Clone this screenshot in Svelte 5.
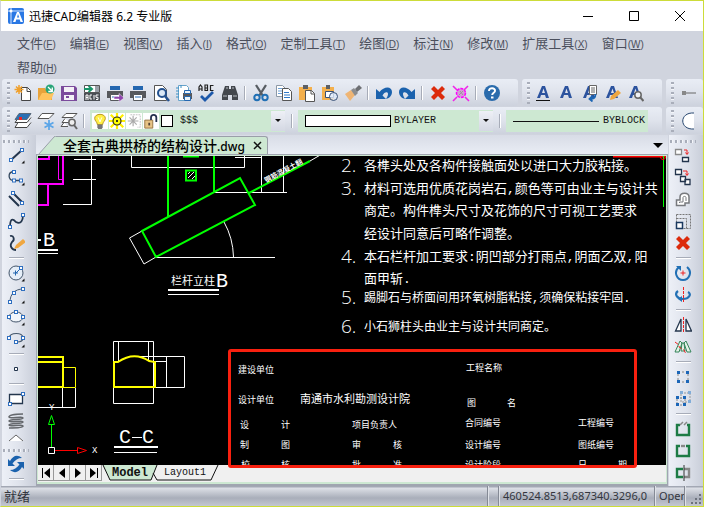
<script>
  const menus = [
    ['文件', 'F'], ['编辑', 'E'], ['视图', 'V'], ['插入', 'I'], ['格式', 'O'], ['定制工具', 'T'],
    ['绘图', 'D'], ['标注', 'N'], ['修改', 'M'], ['扩展工具', 'X'], ['窗口', 'W'], ['帮助', 'H']
  ];

  const A = '<path d="M3 14 8 2h3l4 12h-3l-1-3H7l-1 3zM8 9h3L9.500 4.500z" fill="#2c539e"/>';
  const page = 'M7.500 3.500h6l3 3v10h-9z';
  const cross = '<path d="M2 5l3-3 4 4 4-4 3 3-4 4 4 4-3 3-4-4-4 4-3-3 4-4z" fill="#dc2b0c"/>';
  const sq = (x, y) => `<rect x="${x - 1.5}" y="${y - 1.5}" width="3" height="3" fill="#fff" stroke="#2f6fc0"/>`;
  const more = '<path d="M17.500 14.500v3h-3z" fill="#111"/>';
  const printer = '<path d="M4 2h10v4H4z" fill="#2467b0"/><path d="M1 7h16v7h-3v-2H4v2H1z" fill="#56585c"/><path d="M4.500 10.500h9v6h-9z" fill="#fff" stroke="#56585c"/><path d="M6 13h6" stroke="#2467b0"/>';

  const icons = {
    fresh: `<path d="${page}" fill="#fff" stroke="#444"/><path d="M13 3.500v4h4" fill="none" stroke="#444"/><path d="M5 1v9M.5 5.500h9M2 2.500l6 6M8 2.500l-6 6" stroke="#f0a02c" stroke-width="1.500"/>`,
    open: '<path d="M1 4h7l1 2h6v10H1z" fill="#e8a33b"/><path d="M1 16 5 9h12l-3 7z" fill="#ffc35c"/><circle cx="13" cy="5" r="4.500" fill="#28a579"/><path d="M11 3l4 4M15.300 3.500v4h-4" stroke="#fff" fill="none" stroke-width="1.300"/>',
    save: '<path d="M1 2h14l2 2v13H1z" fill="#7b4b9c"/><path d="M4 3h10v5H4zM4 11h10v5H4z" fill="#f3f1f6"/><path d="M6 13h3" stroke="#7b4b9c" stroke-width="2"/>',
    acis: '<path d="M1.500 1.500h15v7h-15z" fill="#fff" stroke="#555"/><path d="M12 2h4v6h-4z" fill="#9aa0a8"/><path d="M1 5h7M5.500 2 9 5 5.500 8" stroke="#199468" fill="none" stroke-width="2"/><path d="M1 9h16v8H1z" fill="#4b4f55"/><path d="M3 16v-5h2v5M3 13.500h2M9 11H7v4h2M11 11v4.500M15.500 11H13v2.300h2v2.200h-2" stroke="#fff" fill="none"/>',
    printout: printer + '<path d="M8 12.500h5v-3l5 4.500-5 4v-3H8z" fill="#8e44ad" stroke="#fff" stroke-width=".5"/>',
    print: printer,
    preview: '<path d="M2.500 1.500h8l4 4v11h-12z" fill="#fff" stroke="#555"/><circle cx="10" cy="9" r="4" fill="#dbe8f7" stroke="#24518f" stroke-width="2"/><path d="M13 12l4 5" stroke="#24518f" stroke-width="2.500"/>',
    setup: '<path d="M3.500 1.500h8l2 2v13h-10z" fill="#fff" stroke="#67a3ca"/><path d="M1 4h3M1 7h3M1 10h3M1 13h3M6 1v3" stroke="#3f90c4"/><path d="M8 9h9v6H8z" fill="#56585c"/><path d="M9.500 6.500h6v3h-6zM9.500 12.500h6v4h-6z" fill="#eaf4fb" stroke="#2467b0"/>',
    spell: '<path d="M1 7V3l1.500-2L4 3v4M1 5h3M7 1v5.500h2.500V1zM7 4h2.500M15.500 1.500h-3v5h3" fill="none" stroke="#222" stroke-width="1.200"/><path d="M3 12l4 4 8-8" fill="none" stroke="#1c58aa" stroke-width="2.800"/>',
    find: '<path d="M4 2h4v3h2V2h4l3 9v5h-6v-5H7v5H1v-5z" fill="#43474d"/><path d="M2 12h4M12 12h4M5 4h2M11 4h2" stroke="#b9bec5"/>',
    cut: '<path d="M4 1l7 11M14 1 7 12" stroke="#585d63" stroke-width="2.300"/><circle cx="5" cy="13.500" r="2.700" fill="none" stroke="#2170b5" stroke-width="2"/><circle cx="13" cy="13.500" r="2.700" fill="none" stroke="#2170b5" stroke-width="2"/>',
    copy: '<path d="M1.500 1.500h6l3 3v8h-9z" fill="#fff" stroke="#8c98a6"/><path d="M3 4.500h4M3 7h4M3 9.500h4" stroke="#6da0d6"/><path d="M7.500 4.500h6l3 3v9h-9z" fill="#fff" stroke="#555"/><path d="M9 8.500h5M9 11h6M9 13.500h6" stroke="#2e78c8"/>',
    paste: '<path d="M1 3h13v13H1z" fill="#f4b04c"/><path d="M5 1h5v4H5z" fill="#5c5f64"/><path d="M7.500 6.500h6l3 3v8h-9z" fill="#fff" stroke="#555"/><path d="M13 6.500v3.500h3.500" fill="none" stroke="#555"/>',
    special: '<path d="M1 3h12v13H1z" fill="#f4b04c"/><path d="M5 1h4v4H5z" fill="#5c5f64"/><path d="M4.500 7.500h8v6h-8z" fill="#fff" stroke="#385075"/><circle cx="12.500" cy="12.500" r="4" fill="#dfeafa" fill-opacity=".8" stroke="#385075"/>',
    brush: '<path d="M1 10l6-4 4 5-5 6z" fill="#efb574"/><path d="M7 6l3-2 4 5-3 3z" fill="#8b8d90"/><path d="M11 5l4-4 3 3-5 4z" fill="#6d6f73"/>',
    undo: '<path d="M1 5v10h10l-3.500-3.500C9 8 13 7 13 10c0 2-1 3-2 5 4-1 6-4 6-7 0-6-8-6-12.500 0z" fill="#1b62ad"/>',
    redo: '<path d="M17 5v10H7l3.500-3.500C9 8 5 7 5 10c0 2 1 3 2 5-4-1-6-4-6-7 0-6 8-6 12.500 0z" fill="#1b62ad"/>',
    cross,
    purge: '<circle cx="9" cy="9" r="4.500" fill="#d69bd9" stroke="#f0f" stroke-width="1.500" stroke-dasharray="3 1"/><path d="M1 2l4 4M16 2l-4 4M1 17l4-4M17 17l-4-4" stroke="#f025e8" stroke-width="1.600"/><path d="M7 11l4-4M8 7l3 4" stroke="#999"/>',
    help: '<circle cx="9" cy="9" r="8" fill="#2a6bac"/><path d="M6 7c0-4 6.500-3.500 6 0-.2 1.800-2.800 1.800-2.800 4" fill="none" stroke="#fff" stroke-width="2"/><path d="M8 12.500h2.500v2H8z" fill="#fff"/>',
    underline: A + '<path d="M2 16.500h14" stroke="#111"/>',
    text: A,
    textpage: A + '<path d="M9.500 1.500h7v9h-7z" fill="#fff" stroke="#666"/><path d="M11 4h4M11 6h4M11 8h4" stroke="#666"/><path d="M15.500 10c0 4-2 5-5 5M12.500 12l-3 3 3 2.500" stroke="#1c66b4" fill="none" stroke-width="1.800"/>',
    textedit: A + '<path d="M7 16l1-4 7-6 3 3-7 6z" fill="#efa741"/>',
    textfind: A + '<circle cx="12" cy="11" r="3.200" fill="#f0f2f6" stroke="#666" stroke-width="1.500"/><path d="M14 13l3.500 4" stroke="#666" stroke-width="2"/>',
    ray: '<path d="M4 9h14" stroke="#666"/><path d="M4 7h4v4H4z" fill="#888"/>',
    moon: '<path d="M16 1C1 0 1 18 16 17z" fill="#fff"/><path d="M16 1C1 0 1 18 16 17" fill="none" stroke="#26456e"/>',
    layers: '<path d="M4 10.500 1 15.500h12l4-5M4 6.500 1 10.500h12l4-5" fill="#fff" stroke="#444"/><path d="M5 1.500h12l-4 6H1z" fill="#2b70b4" stroke="#5a6a7c"/><path d="M5 5h3v3H5z" fill="#e22"/>',
    layernew: '<path d="M5 1.500h12l-5 5H1z" fill="#fff" stroke="#555"/><path d="M12 8v10M7.500 10.500l9 5M16.500 10.500l-9 5" stroke="#5aa5e8" stroke-width="1.700"/>',
    layerfind: '<path d="M6 1.500h11l-4 4H2zM5 6.500l-3 4h8M4 10.500l-3 4h7" fill="#fff" stroke="#555"/><circle cx="12" cy="10.500" r="3.200" fill="#eee" stroke="#666" stroke-width="1.500"/><path d="M14 13l3 4" stroke="#666" stroke-width="2"/>',
    line: '<path d="M4 14 15 4" stroke="#24364d" stroke-width="2"/>' + sq(4, 14) + sq(15, 4) + more,
    polyline: '<path d="M7 3.500C0 4 1 12.500 7 12.500h7" fill="none" stroke="#33475e" stroke-width="1.300"/>' + sq(7, 4) + sq(7, 12.5) + sq(14, 12.5) + more,
    double: '<path d="M2 6l10 10M6 3l10 10" stroke="#24364d" stroke-width="2"/>' + sq(6, 3) + sq(15, 13),
    spline: '<path d="M3 15C3 3 8 9 9 10c5 3 7-2 7-7" fill="none" stroke="#24364d" stroke-width="1.800"/>' + sq(3, 15) + sq(16, 3),
    sketch: '<path d="M3 2c4-1 5 4 2 6-3 4 0 8 4 8" fill="none" stroke="#24364d" stroke-width="1.800"/><path d="M7 15l2-4 7-6 3 3-8 6z" fill="#efa741"/>',
    circle: '<circle cx="9" cy="9" r="7" fill="#e5eef8" stroke="#44566b"/><path d="M8 10l6-6" stroke="#2467b0"/>' + sq(14, 4) + '<path d="M6 9h5M8.500 6.500v5" stroke="#2467b0"/>' + more,
    arc: '<path d="M3 16C3 8 8 3 16 3" fill="none" stroke="#44566b"/>' + sq(3, 16) + sq(7, 7) + sq(16, 3) + more,
    ellipse: '<ellipse cx="9" cy="9" rx="7" ry="5" fill="#f2f6fb" stroke="#44566b"/>' + sq(9, 4) + sq(2, 9) + sq(16, 9) + more,
    ellarc: '<path d="M2 8C3 2 16 2 16 8c0 3-3 4-6 4" fill="none" stroke="#44566b" stroke-width="1.200"/>' + sq(2, 8) + sq(16, 8) + sq(9, 12) + more,
    point: '<path d="M7.500 7.500h3v3h-3z" fill="#fff" stroke="#22344c"/>',
    rect: '<path d="M2.500 4.500h13v9h-13z" fill="#fff" stroke="#24364d" stroke-width="1.300"/>' + sq(16, 4) + sq(3, 14),
    spiral: '<path d="M16 2C9 2 2 3 2 5s14-1 14 1-14 1-14 3 14-1 14 1-14 1-14 3 14-1 14 1-8 2-14 2" fill="none" stroke="#65686d" stroke-width="1.600"/>',
    sync: '<path d="M1 4v7h7L5.500 8.500C8 5 11 3 15 3 10-1 6 1 3 6zM17 14V7h-7l2.500 2.500C10 13 7 15 3 15c5 4 9 2 12-3z" fill="#1b62ad"/>',
    copyobj: '<path d="M1.500 3.500h6v5h-6z" fill="#fff" stroke="#8a8a8a" stroke-width="1.300"/><path d="M8.500 11.500h6v4h-6z" fill="#fff" stroke="#22344c" stroke-width="1.300"/><path d="M10 4h3v4M11.500 6.500 13 8.500l1.500-2" fill="none" stroke="#e22"/>',
    multiple: '<path d="M1.500 1.500h6v5h-6zM6.500 8.500h5v5h-5zM11 11.500h5v5h-5z" fill="#fff" stroke="#22344c" stroke-width="1.300"/><path d="M9 3h4v4M11.500 5.500 13 7.500l1.500-2" fill="none" stroke="#e22"/>',
    offset: '<path d="M2.500 15.500V10H6V7C6 2 15 2 15 7v6h-4v2.500z" fill="#fff" stroke="#77797d" stroke-width="1.500"/><path d="M5.500 13v-1H9V7.500c0-1.500 3-1.500 3 0V11" fill="none" stroke="#77797d"/>',
    scale: '<path d="M2.500 2.500h14v14h-14zM2.500 6.500h10v10" fill="none" stroke="#777" stroke-dasharray="2 1"/><path d="M2.500 10.500h6v6h-6z" fill="#fff" stroke="#1b3960" stroke-width="1.500"/>',
    rotate: '<path d="M5 3C-1 8 3 16 9 16s10-8 4-13" fill="none" stroke="#2170b5" stroke-width="2"/><path d="M2 2h5v5z" fill="#2170b5"/><path d="M6.500 9h5M9 6.500v5" stroke="#e22"/>',
    rotate3: '<path d="M4 5C0 8 3 13 9 13s9-5 5-7" fill="none" stroke="#2170b5" stroke-width="2.200"/><path d="M8 10v6l-4-3z" fill="#2170b5"/><path d="M9.500 1v16" stroke="#e22" stroke-dasharray="3 1"/>',
    mirror: '<path d="M7 3v12H1.500zM12 3v12h5.500z" fill="#fff" stroke="#24364d" stroke-width="1.300"/><path d="M9.500 1v16" stroke="#e22" stroke-dasharray="3 1"/>',
    mirror3: '<path d="M6 3l2 2-3 9H1zM12 3l-2 2 3 9h4zM8 5h2l1 8H7z" fill="#e4f2e7" stroke="#35855a"/><path d="M1 4l4 3v2l5 3 2 4" stroke="#e22" fill="none" stroke-dasharray="4 2"/>',
    group: '<path d="M4 4h10v10H4z" fill="none" stroke="#888" stroke-dasharray="2 2"/><path d="M3 3h3v3H3zM12 3h3v3h-3zM3 12h3v3H3zM12 12h3v3h-3z" fill="#1b66b8"/>',
    ungroup: '<path d="M7 3h9v9H7z" fill="none" stroke="#999" stroke-dasharray="2 1"/><path d="M6 1h3v3H6zM14 1h3v3h-3zM14 10h3v3h-3z" fill="#82add8"/><path d="M3 8h8v7H3z" fill="none" stroke="#888" stroke-dasharray="2 1"/><path d="M2 6h3v3H2zM9 6h3v3H9zM2 13h3v3H2zM9 13h3v3H9z" fill="#1b66b8"/>',
    break1: '<path d="M6 5H3v10h12V5h-2" fill="none" stroke="#1d7b45" stroke-width="2.400"/><path d="M6 5l3-3M10 5l3-3" stroke="#888" stroke-width="1.500"/>',
    break2: '<path d="M6 4H3v10h12V4h-3" fill="none" stroke="#1d7b45" stroke-width="2.400"/><path d="M7 4h4" stroke="#888" stroke-width="2.400"/>',
    join: '<path d="M9 5H3v8h6" fill="none" stroke="#1d7b45" stroke-width="2.400"/><path d="M10 5h5v8h-5" fill="none" stroke="#888" stroke-width="2.400"/><path d="M10 1v16" stroke="#333"/>',
    bulb: '<path d="M6 13C6 10 3 9 3 6c0-6 12-6 12 0 0 3-3 4-3 7z" fill="#ffef45" stroke="#b38d13"/><path d="M7 5l2 5 2-5" fill="none" stroke="#fff"/><path d="M6 13h6v3l-1 2H7l-1-2z" fill="#777"/>',
    sun: '<path d="M9 0v18M0 9h18M2 2l14 14M16 2 2 16" stroke="#ffef00" stroke-width="2.500"/><circle cx="9" cy="9" r="4.500" fill="#ff0" stroke="#222" stroke-width="1.300"/><path d="M8 8h2v2H8z" fill="#222"/>',
    freeze: '<path d="M5 2h11v14h-3" fill="none" stroke="#bbb" stroke-dasharray="2 1"/><path d="M8 3v12M2 9h12M4 5l8 8M12 5l-8 8" stroke="#aaa" stroke-width="1.300"/>',
    lock: '<path d="M2 8h9v9H2z" fill="#e7c385" stroke="#92703c"/><path d="M9 8V5c0-4 6-4 6 0v5" fill="none" stroke="#26304e" stroke-width="2"/><path d="M6 11h2v3H6z" fill="#543"/>'
  };

  const fileTools = [
    ['fresh', '新建'], ['open', '打开'], ['save', '保存'], ['acis', 'ACIS 输出'], ['printout', '批量打印'],
    ['print', '打印'], ['preview', '打印预览'], ['setup', '页面设置'], ['spell', '拼写检查'], ['find', '查找'], null,
    ['cut', '剪切'], ['copy', '复制'], ['paste', '粘贴'], ['special', '选择性粘贴'], ['brush', '特性匹配'], null,
    ['undo', '撤销'], ['redo', '重做'], null, ['cross', '删除'], ['purge', '清理'], null, ['help', '帮助']
  ];
  const textTools = [['underline', '单行文字'], ['text', '多行文字'], ['textpage', '文字样式'], ['textedit', '编辑文字'], ['textfind', '查找文字']];
  const layerTools = [['layers', '图层'], ['layernew', '新图层'], ['layerfind', '浏览图层']];
  const drawTools = [
    ['line', '直线'], ['polyline', '多段线'], ['double', '双线'], ['spline', '样条曲线'], ['sketch', '徒手画'], null,
    ['circle', '圆'], ['arc', '圆弧'], ['ellipse', '椭圆'], ['ellarc', '椭圆弧'], null, ['point', '点'], null,
    ['rect', '矩形'], ['spiral', '螺旋']
  ];
  const editTools = [
    ['copyobj', '复制对象'], ['multiple', '多重复制'], ['offset', '偏移'], ['scale', '缩放'], ['cross', '删除'], null,
    ['rotate', '旋转'], ['rotate3', '三维旋转'], null, ['mirror', '镜像'], ['mirror3', '三维镜像'], null,
    ['group', '组'], ['ungroup', '取消组'], null, ['break1', '打断'], ['break2', '打断于点'], ['join', '合并']
  ];

  // Numbered notes: number, baseline, size class, text
  const notes = [
    ['2.', 170, 'n13', '各榫头处及各构件接触面处以进口大力胶粘接。'],
    ['3.', 193, 'n13', '材料可选用优质花岗岩石,颜色等可由业主与设计共'],
    ['', 215, 'n13', '商定。构件榫头尺寸及花饰的尺寸可视工艺要求'],
    ['', 238, 'n13', '经设计同意后可略作调整。'],
    ['4.', 261, 'n13', '本石栏杆加工要求:阴凹部分打雨点,阴面乙双,阳'],
    ['', 283, 'n13', '面甲斩.'],
    ['5.', 302, 'n12', '踢脚石与桥面间用环氧树脂粘接,须确保粘接牢固.'],
    ['6.', 331, 'n12', '小石狮柱头由业主与设计共同商定。']
  ];
  // Title block cells: x, baseline, text
  const cells = [
    [238, 373, '建设单位'], [238, 403, '设计单位'], [466, 371, '工程名称'], [467, 406, '图'], [507, 406, '名'],
    [240, 428, '设'], [281, 428, '计'], [352, 428, '项目负责人'], [465, 426, '合同编号'], [578, 426, '工程编号'],
    [240, 448, '制'], [281, 448, '图'], [352, 448, '审'], [393, 448, '核'], [465, 448, '设计编号'], [578, 448, '图纸编号'],
    [241, 468, '校'], [281, 468, '核'], [352, 468, '批'], [393, 468, '准'], [465, 468, '设计阶段'], [578, 468, '日'], [618, 468, '期']
  ];
</script>

{#snippet icon(name)}
  <svg viewBox="0 0 18 18" width="18" height="18" aria-hidden="true">{@html icons[name]}</svg>
{/snippet}

{#snippet tools(list)}
  {#each list as t}
    {#if t}
      <button class="tool" aria-label={t[1]}>{@render icon(t[0])}</button>
    {:else}
      <span class="sep"></span>
    {/if}
  {/each}
{/snippet}

<div class="window">
  <header>
    <svg class="logo" viewBox="0 0 16 16" width="16" height="16" aria-hidden="true">
      <rect width="16" height="16" rx="2" fill="#2a78e4" />
      <path d="M3 0v16M0 3h16" stroke="#d5e6ff" stroke-width="1" />
      <circle cx="3" cy="3" r="1.500" fill="#fff" />
      <path d="M5 14l4-10h2l4 10h-2.500l-.8-2.500H8.200L7.500 14zM9 9.500h2.200L10 6z" fill="#fff" />
    </svg>
    <h1>迅捷CAD编辑器 6.2 专业版</h1>
    <div class="winbtns">
      <button aria-label="最小化"><svg width="12" height="12"><path d="M1 6.500h10" /></svg></button>
      <button aria-label="最大化"><svg width="12" height="12"><path d="M1.500 1.500h9v9h-9z" /></svg></button>
      <button aria-label="关闭"><svg width="12" height="12"><path d="M1 1l10 10M11 1 1 11" /></svg></button>
    </div>
  </header>

  <nav>
    {#each menus as [name, key]}
      <button>{name}<small>(<u>{key}</u>)</small></button>
    {/each}
  </nav>

  <div class="bars">
    <div class="bar grow"><i class="grip"></i>{@render tools(fileTools)}</div>
    <div class="bar mid"><i class="grip"></i>{@render tools(textTools)}</div>
    <div class="bar end"><i class="grip"></i><button class="tool" aria-label="射线">{@render icon('ray')}</button></div>
  </div>

  <div class="bars">
    <div class="bar grow">
      <i class="grip"></i>
      {@render tools(layerTools)}
      <span class="sep"></span>
      <div class="combo layer">
        <select aria-label="当前图层"><option>$$$</option></select>
        <div class="states">
          {#each ['bulb', 'sun', 'freeze', 'lock'] as s}<span>{@render icon(s)}</span>{/each}
          <b></b>
        </div>
      </div>
      <span class="sep wide"></span>
      <div class="combo colour">
        <select aria-label="颜色"><option>BYLAYER</option></select>
        <div class="swatch"></div>
      </div>
      <span class="sep wide"></span>
      <div class="combo ltype">
        <select aria-label="线型"><option>BYBLOCK</option></select>
        <div class="stroke"></div>
      </div>
    </div>
    <div class="bar end"><i class="grip"></i><button class="tool" aria-label="弧">{@render icon('moon')}</button></div>
  </div>

  <main>
    <aside>
      <i class="hgrip"></i>
      {@render tools(drawTools)}
      <button class="more" aria-label="更多"><svg width="16" height="8"><path d="M1 7l7-6 7 6" fill="#fff" stroke="#666" /></svg></button>
      <i class="hgrip"></i>
      <button class="tool" aria-label="同步">{@render icon('sync')}</button>
      <span class="sep"></span>
    </aside>

    <section class="doc">
      <div class="doctabs">
        <svg class="slant" width="18" height="19" aria-hidden="true"><path d="M0 19 16 1q1-1 2-1v19z" fill="#cde8d2" /><path d="M0 19 16 1q1-1 2-1" fill="none" stroke="#9a9fa9" /></svg>
        <div class="tab">
          <span>全套古典拱桥的结构设计<small>.dwg</small></span>
          <button aria-label="关闭图纸"><svg width="9" height="9"><path d="M1 1l7 7M8 1 1 8" stroke="#111" stroke-width="1.500" /></svg></button>
        </div>
        <button class="list" aria-label="图纸列表"><svg width="10" height="5"><path d="M0 0h10L5 5z" /></svg></button>
      </div>

      <div class="frame">
        <div class="canvas">
          <svg class="cad" role="img" aria-label="图纸">
            <!-- Drawing units start at (38,156) -->
            <g transform="translate(-38 -156)">
              <g class="m">
                <path d="M38 159h11v-4M63 155v29H38M48 184v21H38" stroke-width="2" />
                <path d="M58.500 155v24.500H63" />
              </g>
              <path class="w" d="M74 159.500h22M73 179.500h23M91.500 155v49.500H63" />
              <path class="w thick" d="M38 240h3" /><text x="43" y="246" class="big">B</text>
              <path class="w" d="M38 253.500h20" /><path class="w thick" d="M38 250h20" />

              <path class="w" d="M131.500 155v12.500h113V155M214 192.500h73M261.500 155v37M283.500 155v37M235 157.500h26M142 231l-12.500 7L144 264l12-7M156 257.500h119M224 222q9 16 9.500 35" />
              <path class="g" d="M168 155v62M214 155v37M183 156.500h16M186 170.500h10v10h-10zM142 231l98-53 15 27-99 52zM249 193l61-32" />
              <path class="w" d="M188 178l6-6M188 174l2-2M192 179l3-3M310 161l12-7" />
              <text class="slope" transform="translate(266 183) rotate(-28)">钢筋混凝土翻</text>
              <text x="171" y="285" class="t11">栏杆立柱</text><text x="216" y="287" class="big">B</text>
              <path class="w thick" d="M168 290h51" /><path class="w" d="M168 294.500h51" />

              <path class="w" d="M62.500 388v19M75.500 388v19.500H38M113.500 341.500h40v62h-40zM118.500 341v20M148.500 341v19M137 356.500h47.500v31H154M166.500 356v31M155 361.500h11" />
              <path class="y" d="M38 357h25v30H38M38 362h25M114 387v-25h4q16-11 31-1l6 1v25z" stroke-width="2" />
              <path class="y" d="M63 367.500h12.500v20H63" />
              <text x="119" y="443" class="big">C</text><path class="w" d="M132 437.500h10" /><text x="142" y="443" class="big">C</text>
              <path class="w thick" d="M114 447h44" /><path class="w" d="M114 452.500h43" />

              <path d="M51.500 447v-22M48.500 424.500h6l-3-9z" fill="none" stroke="#0f0" />
              <path d="M54 450.500h23M77.500 447.500v6l9-3z" fill="none" stroke="#f00" />
              <path class="w" d="M48.500 447.500h6v6h-6z" />
              <text x="49" y="410" class="axis">Y</text><text x="92" y="453" class="axis">X</text>

              <path d="M613 156.500h52" stroke="#f00" stroke-width="2" /><path d="M663.500 156v51" stroke="#0f0" />
              <circle cx="663" cy="157" r="2.500" fill="none" stroke="#f00" />

              {#each notes as [num, y, size, text]}
                {#if num}<text x="341" y={y + 2} class="num">{num}</text>{/if}
                <text x="364" {y} class={size}>{text}</text>
              {/each}
              {#each cells as [x, y, text]}
                <text {x} {y} class="t9">{text}</text>
              {/each}
              <text x="300" y="403" class="t11">南通市水利勘测设计院</text>
            </g>
          </svg>
          <div class="mark"></div>
        </div>
        <div class="sheets">
          <button class="nav" aria-label="首页"><svg width="10" height="10"><path d="M1 0h1v10H1zM9 0v10L3 5z" /></svg></button>
          <button class="nav" aria-label="上一页"><svg width="10" height="10"><path d="M8 0v10L2 5z" /></svg></button>
          <button class="nav" aria-label="下一页"><svg width="10" height="10"><path d="M2 0v10l6-5z" /></svg></button>
          <button class="nav" aria-label="末页"><svg width="10" height="10"><path d="M8 0h1v10H8zM1 0v10l6-5z" /></svg></button>
          <div class="sheettabs">
            <svg width="118" height="16" aria-hidden="true">
              <path d="M1 0l7 15h41l6-15z" fill="#cde8d2" />
              <path d="M1 0l7 15h41l6-15M51 8l4 7h54l7-15" fill="none" stroke="#111" />
            </svg>
            <button class="on">Model</button><button>Layout1</button>
          </div>
        </div>
      </div>
    </section>

    <aside class="right">
      <i class="hgrip"></i>
      {@render tools(editTools)}
    </aside>
  </main>

  <footer>
    <span class="ready">就绪</span>
    <span class="blank"></span>
    <span class="coord">460524.8513,687340.3296,0</span>
    <span class="gl">OpenGL</span>
    <svg width="12" height="12" aria-hidden="true"><path d="M9 1h2v2H9zM5 5h2v2H5zM9 5h2v2H9zM1 9h2v2H1zM5 9h2v2H5zM9 9h2v2H9z" fill="#6d727d" /></svg>
  </footer>
</div>

<style>
  :global(body) { overflow: hidden; }
  .window {
    box-sizing: border-box;
    height: 100vh;
    display: flex;
    flex-direction: column;
    border: 1px solid #cddc39;
    border-left-color: #d0d4de;
    background: #d0d4de;
    font: 12px 'Noto Sans', 'Noto Sans CJK SC', sans-serif;
    color: #111;
  }
  button { border: 0; padding: 0; margin: 0; background: none; font: inherit; color: inherit; }
  svg { display: block; flex: none; }

  header { height: 30px; flex: none; display: flex; align-items: center; background: #fff; padding-left: 7px; }
  h1 { flex: 1; margin: 0 0 0 5px; font-size: 12px; font-weight: 400; color: #000; white-space: nowrap; }
  .winbtns { display: flex; }
  .winbtns button { width: 46px; height: 28px; display: grid; place-items: center; }
  .winbtns path { fill: none; stroke: #000; }

  nav { flex: none; display: flex; flex-wrap: wrap; padding: 0 20px 0 16px; column-gap: 14px; height: 48px; align-content: flex-start; }
  nav button { height: 24px; font-size: 13px; color: #4b4f5c; white-space: nowrap; line-height: 22px; }
  nav small { font: 10px 'Liberation Sans', sans-serif; }

  .bars { flex: none; display: flex; gap: 4px; padding-left: 1px; height: 28px; }
  .bar { box-sizing: border-box; display: flex; align-items: center; min-width: 0; height: 27px; padding-left: 5px; border-radius: 3px; background: linear-gradient(#e9edf5, #dfe3ec 50%, #cdd2dd); }
  .grow { flex: 1; }
  .mid { width: 140px; flex: none; }
  .end { width: 37px; flex: none; overflow: hidden; }
  .grip { width: 3px; height: 22px; flex: none; margin-right: 1px; background: repeating-linear-gradient(#a9aeba 0 2px, #f4f6fa 2px 3px, transparent 3px 5px); }
  .tool { width: 23px; height: 22px; flex: none; display: grid; place-items: center; }
  .sep { width: 2px; height: 14px; flex: none; margin: 0 3px; background: linear-gradient(90deg, #a7acb8 50%, #fff 50%); }
  .wide { margin: 0 5px 0 6px; }

  .combo { position: relative; height: 22px; background: #cde8d2; display: flex; }
  .layer { width: 195px; margin-left: 2px; }
  .colour { width: 195px; }
  .ltype { width: 142px; }
  .layer::after, .colour::after { content: ''; position: absolute; right: 0; top: 1px; width: 14px; height: 20px; background: linear-gradient(#eef0f6, #d4d8e3); pointer-events: none; }
  .layer::before, .colour::before { content: ''; position: absolute; z-index: 1; right: 4px; top: 9px; border: 3px solid transparent; border-top-color: #111; border-bottom: 0; pointer-events: none; }
  select { appearance: none; width: 100%; border: 0; border-radius: 0; margin: 0; padding: 0; background: none; color: #111; font: 10px 'Liberation Mono', monospace; }
  .layer select { padding-left: 90px; }
  .colour select { padding-left: 96px; }
  .ltype select { padding-left: 97px; }
  .states { position: absolute; left: 2px; top: 3px; display: flex; gap: 1px; align-items: center; pointer-events: none; }
  .states span { width: 16px; height: 16px; background: #fff; display: grid; }
  .states svg { width: 16px; height: 16px; }
  .states b { width: 10px; height: 10px; border: 1px solid #000; background: #fff; margin-left: 1px; }
  .swatch { position: absolute; left: 7px; top: 5px; width: 84px; height: 10px; border: 1px solid #000; background: #fff; pointer-events: none; }
  .stroke { position: absolute; left: 7px; top: 11px; width: 86px; height: 1px; background: #111; pointer-events: none; }

  main { flex: 1; min-height: 0; display: flex; }
  aside { box-sizing: border-box; width: 34px; flex: none; display: flex; flex-direction: column; align-items: center; overflow: hidden; margin-left: 1px; padding: 5px 6px 0 0; background: linear-gradient(90deg, #edf0f7, #dfe3ec 50%, #c9ced9); }
  .hgrip { width: 26px; height: 3px; flex: none; margin-bottom: 1px; background: repeating-linear-gradient(90deg, #a9aeba 0 2px, #f4f6fa 2px 3px, transparent 3px 5px); }
  aside .sep { width: 15px; height: 2px; margin: 3px 0; background: linear-gradient(#a7acb8 50%, #fff 50%); }
  .more { height: 12px; display: grid; place-items: center; }
  .more + .hgrip { margin-top: 5px; }

  .doc { flex: 1; min-width: 0; display: flex; flex-direction: column; background: #e3e7ef; }
  .doctabs { flex: none; height: 19px; display: flex; align-items: stretch; background: linear-gradient(#d8dce6, #e9edf5); padding: 1px 0 0 2px; box-sizing: border-box; }
  .slant { height: 18px; }
  .tab { display: flex; align-items: center; gap: 8px; padding: 0 5px 0 7px; background: #cde8d2; border-top: 1px solid #9a9fa9; border-right: 1px solid #9a9fa9; border-radius: 0 3px 0 0; }
  .tab span { font: 500 14px/15px 'Noto Sans CJK SC', sans-serif; white-space: nowrap; color: #000; }
  .tab small { font: 500 12px/15px 'Noto Sans', sans-serif; }
  .list { margin-left: auto; padding: 0 5px; }
  .frame { flex: 1; min-height: 0; display: flex; flex-direction: column; border: 1px solid #a0a5b0; border-width: 1px 1px 2px; box-sizing: border-box; padding: 1px 1px 2px; background: #cde8d2; }
  .canvas { position: relative; flex: 1; min-height: 0; background: #000; }
  .cad { position: absolute; inset: 0; width: 100%; height: 100%; overflow: hidden; }
  .cad path { fill: none; }
  .w { stroke: #fff; }
  .thick { stroke-width: 2; }
  .m { stroke: #f0f; }
  .g { stroke: #0f0; stroke-width: 2; }
  .y { stroke: #ff0; }
  .cad text { fill: #fff; font-family: 'Liberation Mono', 'Noto Sans CJK SC', monospace; }
  .cad .n13 { font-size: 13px; }
  .cad .n12 { font-size: 12px; }
  .cad .t11 { font-size: 11px; }
  .cad .t9 { font-size: 9px; }
  .cad .num { font: 300 19px 'Open Sans', 'Liberation Sans', sans-serif; }
  .cad .big { font-size: 20px; }
  .cad .axis { font-size: 9px; }
  .cad .slope { font-size: 7px; font-weight: 700; }
  .mark { position: absolute; left: 190px; top: 193px; width: 403px; height: 113px; border: 3px solid #f8200f; border-radius: 3px; z-index: 2; }

  .sheets { flex: none; height: 17px; display: flex; align-items: flex-start; background: #f0f0f0; }
  .nav { width: 16px; height: 16px; box-sizing: border-box; display: grid; place-items: center; background: #f0f0f0; border: 1px solid #999; border-width: 0 1px 1px 0; }
  .sheettabs { position: relative; height: 16px; display: flex; }
  .sheettabs svg { position: absolute; left: 0; top: 0; }
  .sheettabs button { position: relative; height: 15px; padding-left: 10px; font: 10px 'Liberation Mono', monospace; }
  .sheettabs .on { font-size: 12px; font-weight: 700; padding-right: 6px; }

  footer { flex: none; height: 20px; display: flex; align-items: center; background: linear-gradient(#a3a8b4 0 1px, #dde0e7 2px, #a9aeba 60%, #c3c7d1); font-size: 11px; color: #33363e; }
  footer span { box-sizing: border-box; height: 20px; line-height: 20px; border-right: 1px solid #858a95; box-shadow: 1px 0 #dfe2e8; white-space: nowrap; overflow: hidden; }
  .ready { flex: 1; padding-left: 3px; font-size: 13px; }
  .blank { width: 11px; }
  .coord { width: 156px; padding-left: 4px; }
  .gl { width: 30px; padding-left: 4px; }
  footer svg { margin: 6px 1px 0 5px; }
</style>
